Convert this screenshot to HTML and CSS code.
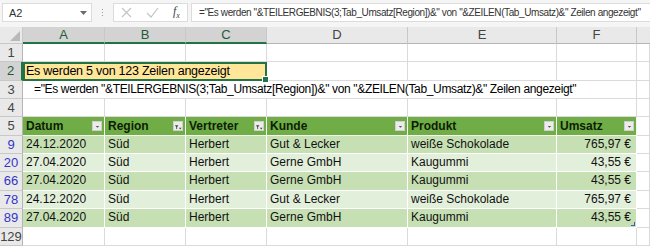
FILE: index.html
```html
<!DOCTYPE html>
<html lang="de">
<head>
	<meta charset="UTF-8">
	<title>Teilergebnis</title>
	<link rel="stylesheet" href="styles.css">
</head>
<body>
	<div class="bar">
		<div class="namebox">
			<span>A2</span>
			<svg width="7" height="4" viewBox="0 0 7 4"><path d="M0 0h7L3.5 4z" fill="#6b6b6b"/></svg>
		</div>
		<div class="dots"><i></i><i></i><i></i></div>
		<div class="btns">
			<svg width="11" height="11" viewBox="0 0 11 11"><path d="M1 1l9 9M10 1l-9 9" stroke="#c4c4c4" stroke-width="1.2"/></svg>
			<svg width="13" height="11" viewBox="0 0 13 11"><path d="M1 6l4 4 7-9" stroke="#c4c4c4" stroke-width="1.2" fill="none"/></svg>
			<span class="fx">f<sub>x</sub></span>
		</div>
		<div class="formula">="Es werden "&amp;TEILERGEBNIS(3;Tab_Umsatz[Region])&amp;" von "&amp;ZEILEN(Tab_Umsatz)&amp;" Zeilen angezeigt"</div>
	</div>

	<div class="sheet">
		<div class="corner"><svg width="10" height="10" viewBox="0 0 10 10"><path d="M10 0v10H0z" fill="#b9b9b9"/></svg></div>
		<div class="ch sel">A</div>
		<div class="ch sel">B</div>
		<div class="ch sel">C</div>
		<div class="ch">D</div>
		<div class="ch">E</div>
		<div class="ch">F</div>
		<div class="ch last"></div>

		<div class="rh">1</div>
		<div class="c"></div><div class="c"></div><div class="c"></div><div class="c"></div><div class="c"></div><div class="c"></div><div class="c"></div>

		<div class="rh sel">2</div>
		<div class="c active">Es werden 5 von 123 Zeilen angezeigt<span class="handle"></span></div>
		<div class="c"></div><div class="c"></div><div class="c"></div><div class="c"></div>

		<div class="rh">3</div>
		<div class="c spill">="Es werden "&amp;TEILERGEBNIS(3;Tab_Umsatz[Region])&amp;" von "&amp;ZEILEN(Tab_Umsatz)&amp;" Zeilen angezeigt"</div>
		<div class="c"></div>

		<div class="rh">4</div>
		<div class="c"></div><div class="c"></div><div class="c"></div><div class="c"></div><div class="c"></div><div class="c"></div><div class="c"></div>

		<div class="rh">5</div>
		<div class="c th">Datum<span class="fb"><svg width="9" height="9" viewBox="0 0 9 9"><path d="M3 4h4L5 6z" fill="#555"/></svg></span></div>
		<div class="c th">Region<span class="fb"><svg width="9" height="9" viewBox="0 0 9 9"><path d="M1 3h4L3.5 5v2.5L2.5 7V5z" fill="#444"/><path d="M5.5 6h3L7 7.8z" fill="#444"/></svg></span></div>
		<div class="c th">Vertreter<span class="fb"><svg width="9" height="9" viewBox="0 0 9 9"><path d="M1 3h4L3.5 5v2.5L2.5 7V5z" fill="#444"/><path d="M5.5 6h3L7 7.8z" fill="#444"/></svg></span></div>
		<div class="c th">Kunde<span class="fb"><svg width="9" height="9" viewBox="0 0 9 9"><path d="M3 4h4L5 6z" fill="#555"/></svg></span></div>
		<div class="c th">Produkt<span class="fb"><svg width="9" height="9" viewBox="0 0 9 9"><path d="M3 4h4L5 6z" fill="#555"/></svg></span></div>
		<div class="c th">Umsatz<span class="fb"><svg width="9" height="9" viewBox="0 0 9 9"><path d="M3 4h4L5 6z" fill="#555"/></svg></span></div>
		<div class="c"></div>

		<div class="rh hid">9</div>
		<div class="c b1">24.12.2020</div><div class="c b1">Süd</div><div class="c b1">Herbert</div><div class="c b1">Gut &amp; Lecker</div><div class="c b1">weiße Schokolade</div><div class="c b1 num">765,97 €</div><div class="c"></div>

		<div class="rh hid">20</div>
		<div class="c b2">27.04.2020</div><div class="c b2">Süd</div><div class="c b2">Herbert</div><div class="c b2">Gerne GmbH</div><div class="c b2">Kaugummi</div><div class="c b2 num">43,55 €</div><div class="c"></div>

		<div class="rh hid">66</div>
		<div class="c b1">27.04.2020</div><div class="c b1">Süd</div><div class="c b1">Herbert</div><div class="c b1">Gerne GmbH</div><div class="c b1">Kaugummi</div><div class="c b1 num">43,55 €</div><div class="c"></div>

		<div class="rh hid">78</div>
		<div class="c b2">24.12.2020</div><div class="c b2">Süd</div><div class="c b2">Herbert</div><div class="c b2">Gut &amp; Lecker</div><div class="c b2">weiße Schokolade</div><div class="c b2 num">765,97 €</div><div class="c"></div>

		<div class="rh hid">89</div>
		<div class="c b1">27.04.2020</div><div class="c b1">Süd</div><div class="c b1">Herbert</div><div class="c b1">Gerne GmbH</div><div class="c b1">Kaugummi</div><div class="c b1 num">43,55 €<span class="resize"></span></div><div class="c"></div>

		<div class="rh">129</div>
		<div class="c"></div><div class="c"></div><div class="c"></div><div class="c"></div><div class="c"></div><div class="c"></div><div class="c"></div>
	</div>
</body>
</html>
```

FILE: styles.css
```css
html, body {
	margin: 0;
	padding: 0;
	background: #fff;
	overflow: hidden;
}
body {
	font-family: 'Liberation Sans', Arial, sans-serif;
	color: #111;
}
.bar {
	display: flex;
	align-items: center;
	height: 27px;
	background: #f5f5f5;
	padding: 0 0 2px 2px;
	box-sizing: border-box;
}
.namebox {
	display: flex;
	align-items: center;
	justify-content: space-between;
	width: 90px;
	height: 19px;
	box-sizing: border-box;
	background: #fff;
	border: 1px solid #dcdcdc;
	padding: 0 4px 0 6px;
	font-size: 11px;
	color: #333;
}
.dots {
	display: flex;
	flex-direction: column;
	gap: 2px;
	margin: 0 10px 0 10px;
}
.dots i {
	display: block;
	width: 1px;
	height: 1px;
	background: #9a9a9a;
}
.btns {
	display: flex;
	align-items: center;
	gap: 14px;
	width: 75px;
	height: 19px;
	box-sizing: border-box;
	background: #fff;
	border: 1px solid #dcdcdc;
	padding: 0 0 0 7px;
}
.fx {
	font-family: 'Liberation Serif', serif;
	font-style: italic;
	font-size: 12px;
	color: #444;
}
.fx sub {
	font-size: 8px;
}
.formula {
	flex: 1;
	height: 19px;
	line-height: 18px;
	box-sizing: border-box;
	background: #fff;
	border: 1px solid #dcdcdc;
	border-right: none;
	margin-left: 3px;
	padding-left: 7px;
	font-size: 10px;
	letter-spacing: -0.4px;
	color: #333;
	white-space: nowrap;
	overflow: hidden;
}
.sheet {
	display: grid;
	grid-template-columns: 23px 82px 81px 81px 141px 149px 80px 1fr;
	grid-template-rows: 17px 18px 19px 18px 18px 19px 18px 18px 19px 18px 19px 18px;
	font-size: 12px;
}
.sheet > div {
	box-sizing: border-box;
	min-width: 0;
}
.corner {
	background: #e9e9e9;
	border-right: 1px solid #c8c8c8;
	border-bottom: 1px solid #c8c8c8;
	display: flex;
	align-items: flex-end;
	justify-content: flex-end;
	padding: 0 2px 2px 0;
}
.ch {
	background: #e9e9e9;
	border-right: 1px solid #c8c8c8;
	border-bottom: 1px solid #b5b5b5;
	text-align: center;
	line-height: 16px;
	font-size: 13px;
	color: #444;
}
.ch.sel {
	background: #d3d3d3;
	border-bottom: 2px solid #217346;
	color: #1d5c36;
}
.ch.last {
	border-right: none;
}
.rh {
	background: #e9e9e9;
	border-right: 1px solid #b5b5b5;
	border-bottom: 1px solid #c8c8c8;
	text-align: center;
	line-height: 17px;
	font-size: 13px;
	color: #444;
}
.rh.sel {
	background: #d3d3d3;
	border-right: 2px solid #217346;
	color: #1d5c36;
}
.rh.hid {
	color: #3535c8;
}
.c {
	border-right: 1px solid #dadada;
	border-bottom: 1px solid #dadada;
	padding: 0 3px;
	line-height: 17px;
	white-space: nowrap;
}
.active {
	grid-column: span 3;
	position: relative;
	background: #ffe699;
	border: 2px solid #217346;
	padding: 0 1px;
	line-height: 15px;
	font-size: 12.5px;
	letter-spacing: -0.25px;
	color: #000;
}
.handle {
	position: absolute;
	right: -4px;
	bottom: -4px;
	width: 5px;
	height: 5px;
	background: #217346;
	border: 1px solid #fff;
}
.spill {
	grid-column: span 6;
	padding-left: 11px;
	letter-spacing: -0.35px;
	color: #000;
}
.th {
	display: flex;
	align-items: center;
	justify-content: space-between;
	background: #70ad47;
	border-right: 1px solid #f3f8ef;
	border-bottom: 1px solid #f3f8ef;
	font-weight: bold;
	color: #0d1d05;
	padding-right: 2px;
}
.fb {
	display: flex;
	width: 10px;
	height: 10px;
	box-sizing: border-box;
	background: #ececec;
	border: 1px solid #cfcfcf;
	align-items: center;
	justify-content: center;
}
.b1 {
	background: #c6e0b4;
	border-right: 1px solid #fff;
	border-bottom: 1px solid #fff;
}
.b2 {
	background: #e2efda;
	border-right: 1px solid #fff;
	border-bottom: 1px solid #fff;
}
.num {
	text-align: right;
	padding-right: 5px;
	position: relative;
}
.resize {
	position: absolute;
	right: 1px;
	bottom: 1px;
	width: 3px;
	height: 3px;
	border-right: 1px solid #3d5fb8;
	border-bottom: 1px solid #3d5fb8;
}
```
